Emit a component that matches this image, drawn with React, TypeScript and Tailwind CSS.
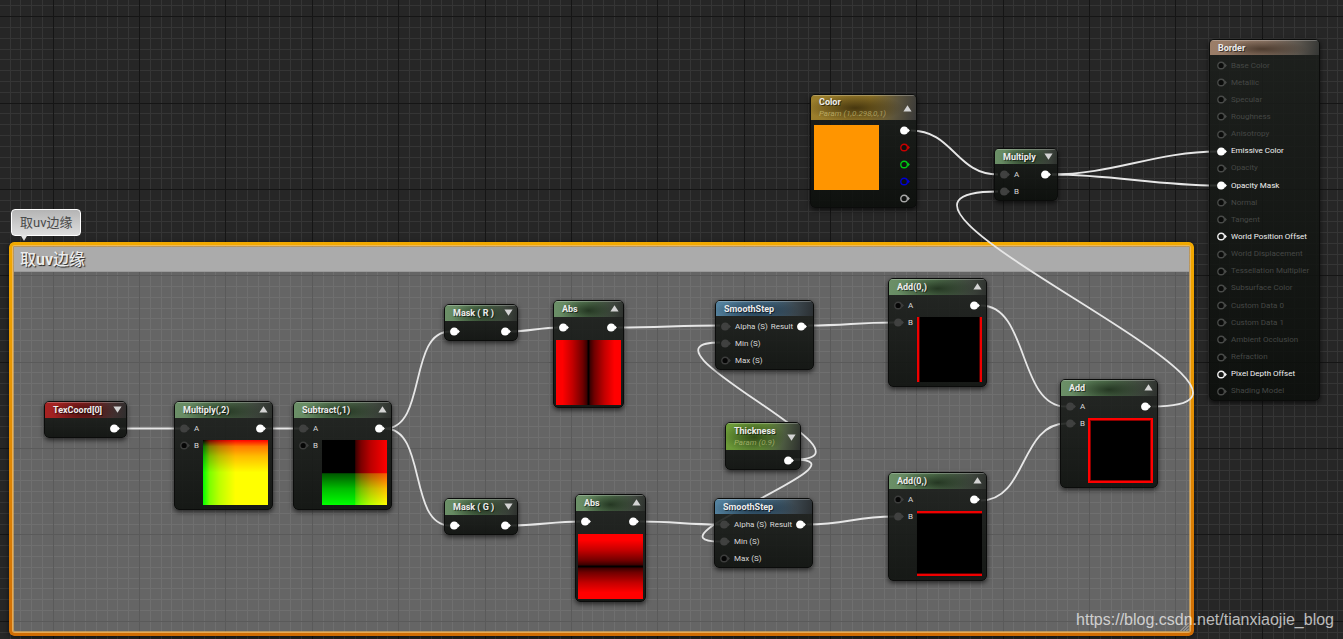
import React from 'react';
import clsx from 'clsx';

type PinKind = 'filled' | 'linked' | 'empty' | 'ring' | 'off' | 'red' | 'green' | 'blue' | 'alpha';

const PIN_COLORS: Record<PinKind, { stroke: string; fill: string }> = {
    filled: { stroke: '#ffffff', fill: '#ffffff' },
    linked: { stroke: '#404140', fill: '#404140' },
    empty: { stroke: '#3c3d3c', fill: '#060606' },
    ring: { stroke: '#f0f0f0', fill: '#141614' },
    off: { stroke: '#484a48', fill: '#0a0b0a' },
    red: { stroke: '#c80000', fill: '#101210' },
    green: { stroke: '#00c814', fill: '#101210' },
    blue: { stroke: '#0000d2', fill: '#101210' },
    alpha: { stroke: '#a8a8a8', fill: '#101210' },
};

const HEADERS = {
    green: 'bg-[radial-gradient(ellipse_42%_80%_at_50%_60%,rgba(28,44,26,0.85),transparent),linear-gradient(100deg,#6c9068,#5b7e57_45%,#414a40_80%,#2e312e)]',
    blue: 'bg-[radial-gradient(ellipse_44%_80%_at_42%_65%,rgba(22,44,62,0.85),transparent),linear-gradient(100deg,#54829f,#4a728d_50%,#3c4850_80%,#2b2f32)]',
    red: 'bg-[radial-gradient(ellipse_40%_80%_at_48%_60%,rgba(60,12,12,0.85),transparent),linear-gradient(100deg,#a82222,#922221_45%,#4a3030_78%,#2e2e2e)]',
    lime: 'bg-[radial-gradient(ellipse_42%_60%_at_38%_52%,rgba(38,62,18,0.85),transparent),linear-gradient(100deg,#6d9c38,#668f38_50%,#4b5840_78%,#2e312e)]',
    gold: 'bg-[radial-gradient(ellipse_46%_55%_at_42%_52%,rgba(58,44,10,0.85),transparent),linear-gradient(100deg,#9c7f2c,#8c7228_55%,#5c543c_80%,#3a3a3a)]',
    tan: 'bg-[radial-gradient(ellipse_42%_60%_at_48%_60%,rgba(62,46,34,0.8),transparent),linear-gradient(100deg,#9c7e68,#8b7464_50%,#5c564e_80%,#343634)]',
};

const PREVIEWS = {
    uv: 'bg-[linear-gradient(to_right,#000,#7b0000_10%,#bc0000_25%,#f00_50%),linear-gradient(to_bottom,#000,#007b00_10%,#00bc00_25%,#0f0_50%)] bg-blend-screen',
    uvShift: 'bg-[linear-gradient(to_right,#000_50%,#400000_52%,#7b0000_60%,#bc0000_75%,#f00),linear-gradient(to_bottom,#000_50%,#005900_52%,#007b00_60%,#00bc00_75%,#0f0)] bg-blend-screen',
    absU: 'bg-[linear-gradient(to_right,#f00_10%,#c40000_25%,#700000_41%,#380000_48%,#000_49%,#000_51%,#380000_52%,#700000_59%,#c40000_75%,#f00_90%)]',
    absV: 'bg-[linear-gradient(to_bottom,#f00_10%,#c40000_25%,#700000_41%,#380000_48%,#000_49%,#000_51%,#380000_52%,#700000_59%,#c40000_75%,#f00_90%)]',
    edgeU: 'bg-black border-x-2 border-[#f00000] shadow-[inset_1px_0_#5a0000,inset_-1px_0_#5a0000]',
    edgeV: 'bg-black border-y-2 border-[#f00000] shadow-[inset_0_1px_#5a0000,inset_0_-1px_#5a0000]',
    edge: 'bg-black border-2 border-[#ff0000] shadow-[inset_0_0_0_1px_#8a0000]',
    solid: 'bg-[#ff9500]',
};

// Major grid line every 8 cells
const CELL = 10.795;
const GRID_LINES = Array.from({ length: 400 }, (_, i) => i - 8);

const Grid = () => (
    <svg className="absolute inset-0 h-full w-full" shapeRendering="crispEdges" aria-hidden="true">
        {[false, true].map(major =>
            GRID_LINES.filter(i => (i % 8 === 0) === major).map(i => {
                const x = Math.floor(53.2 + i * CELL);
                const y = Math.floor(16.7 + i * CELL);
                return (
                    <g key={i} fill={major ? '#151515' : '#353535'}>
                        <rect x={x} y="0" width="1" height="100%" />
                        <rect x="0" y={y} width="100%" height="1" />
                    </g>
                );
            })
        )}
    </svg>
);

// [x1, y1, x2, y2, tangent]
const WIRES: number[][] = [
    [120, 428, 180, 428, 20],
    [266, 428, 300, 428, 10],
    [385, 428, 450, 331, 42],
    [385, 428, 450, 525, 42],
    [511, 331, 558, 327, 15],
    [511, 525, 580, 521, 25],
    [618, 327, 720, 325, 40],
    [640, 521, 720, 524, 35],
    [794, 459, 720, 342, 98],
    [794, 459, 720, 541, 82],
    [808, 325, 894, 322, 40],
    [807, 524, 894, 516, 40],
    [981, 305, 1066, 406, 48],
    [981, 500, 1066, 423, 46],
    [1152, 406, 998, 191, 188],
    [911, 130, 998, 174, 42],
    [1052, 174, 1217, 151, 60],
    [1052, 174, 1217, 185, 60],
];

const Wires = () => (
    <svg className="absolute inset-0 h-full w-full" fill="none" stroke="#e6e6e6" strokeWidth="1.8" aria-hidden="true">
        {WIRES.map(([x1, y1, x2, y2, t], i) => (
            <path key={i} d={`M${x1} ${y1 + 0.5}C${x1 + t} ${y1 + 0.5} ${x2 - t} ${y2 + 0.5} ${x2} ${y2 + 0.5}`} />
        ))}
    </svg>
);

const Pin = ({ kind }: { kind: PinKind }) => {
    const { stroke, fill } = PIN_COLORS[kind];
    return (
        <svg width="10" height="9" viewBox="0 0 10 9" className="shrink-0" aria-hidden="true">
            <path d="M8 2.6 9.9 4.5 8 6.4Z" fill={stroke} />
            <circle cx="4.1" cy="4.5" r="3.3" fill={fill} stroke={stroke} strokeWidth="1.4" />
        </svg>
    );
};

const InPin = ({ kind, label }: { kind: PinKind; label?: string }) => (
    <div className="flex h-[17px] items-center gap-1 whitespace-nowrap">
        <Pin kind={kind} />
        {label && <span>{label}</span>}
    </div>
);

const OutPin = ({ kind = 'filled', label }: { kind?: PinKind; label?: string }) => (
    <div className="flex h-[17px] items-center justify-end gap-1 pr-1.5">
        {label && <span>{label}</span>}
        <Pin kind={kind} />
    </div>
);

const Preview = ({ kind }: { kind: keyof typeof PREVIEWS }) => (
    <div className={clsx('size-[65px] shrink-0', PREVIEWS[kind])} />
);

interface NodeProps {
    title: string;
    sub?: string;
    color: keyof typeof HEADERS;
    place: string;
    header?: string;
    arrow?: 'up' | 'down';
    children: React.ReactNode;
}

const Node = ({ title, sub, color, place, header = 'h-4', arrow, children }: NodeProps) => (
    <section
        className={clsx(
            'absolute overflow-hidden rounded-[5px] border border-[#0b0c0b] bg-linear-to-b from-[#1c1f1c]/88 to-[#0b0e0b]/88 text-[8px] text-[#d8d8d8] shadow-[0_2px_5px_rgba(0,0,0,0.65)]',
            place
        )}
    >
        <header
            className={clsx(
                'flex justify-between pr-1 pl-2 shadow-[inset_0_1px_rgba(255,255,255,0.25)]',
                sub ? 'items-center' : 'items-start pt-0.5',
                header,
                HEADERS[color]
            )}
        >
            <div className="whitespace-nowrap">
                <h3 className="text-[9px] leading-[13px] font-bold text-[#ececec] [text-shadow:1px_1px_#0008]">{title}</h3>
                {sub && <p className="text-[8px] leading-[10px] text-[#fff8b0]/45 italic">{sub}</p>}
            </div>
            {arrow && (
                <button type="button" aria-label="Toggle preview" className="mt-0.5 shrink-0">
                    <svg width="9" height="7" viewBox="0 0 9 7" fill="#d4d4d4">
                        <path d={arrow === 'up' ? 'M4.5 0.3 8.6 6.6H0.4Z' : 'M4.5 6.7 8.6 0.4H0.4Z'} />
                    </svg>
                </button>
            )}
        </header>
        <div className="pt-0.5">{children}</div>
    </section>
);

const MathNode = ({ title, place, preview, a = 'linked', b = 'empty' }: {
    title: string; place: string; preview: keyof typeof PREVIEWS; a?: PinKind; b?: PinKind;
}) => (
    <Node title={title} color="green" place={place} arrow="up">
        <div className="flex justify-between pb-1 pl-[5px]">
            <div>
                <InPin kind={a} label="A" />
                <InPin kind={b} label="B" />
            </div>
            <div>
                <OutPin />
                <div className="pt-[3px] pr-1">
                    <Preview kind={preview} />
                </div>
            </div>
        </div>
    </Node>
);

const MaskNode = ({ title, place }: { title: string; place: string }) => (
    <Node title={title} color="green" place={clsx('w-[74px]', place)} arrow="down">
        <div className="flex justify-between pl-[5px]">
            <InPin kind="filled" />
            <OutPin />
        </div>
    </Node>
);

const AbsNode = ({ place, preview }: { place: string; preview: keyof typeof PREVIEWS }) => (
    <Node title="Abs" color="green" place={clsx('w-[71px]', place)} arrow="up">
        <div className="flex justify-between pl-[5px]">
            <InPin kind="filled" />
            <OutPin />
        </div>
        <div className="flex justify-center pt-1 pb-0.5">
            <Preview kind={preview} />
        </div>
    </Node>
);

const SmoothStepNode = ({ place }: { place: string }) => (
    <Node title="SmoothStep" color="blue" place={clsx('w-[99px]', place)} header="h-[15px]">
        <div className="flex justify-between pl-[5px]">
            <div>
                <InPin kind="linked" label="Alpha (S)" />
                <InPin kind="linked" label="Min (S)" />
                <InPin kind="empty" label="Max (S)" />
            </div>
            <OutPin label="Result" />
        </div>
    </Node>
);

const OUTPUTS: { label: string; kind: PinKind }[] = [
    { label: 'Base Color', kind: 'off' },
    { label: 'Metallic', kind: 'off' },
    { label: 'Specular', kind: 'off' },
    { label: 'Roughness', kind: 'off' },
    { label: 'Anisotropy', kind: 'off' },
    { label: 'Emissive Color', kind: 'filled' },
    { label: 'Opacity', kind: 'off' },
    { label: 'Opacity Mask', kind: 'filled' },
    { label: 'Normal', kind: 'off' },
    { label: 'Tangent', kind: 'off' },
    { label: 'World Position Offset', kind: 'ring' },
    { label: 'World Displacement', kind: 'off' },
    { label: 'Tessellation Multiplier', kind: 'off' },
    { label: 'Subsurface Color', kind: 'off' },
    { label: 'Custom Data 0', kind: 'off' },
    { label: 'Custom Data 1', kind: 'off' },
    { label: 'Ambient Occlusion', kind: 'off' },
    { label: 'Refraction', kind: 'off' },
    { label: 'Pixel Depth Offset', kind: 'ring' },
    { label: 'Shading Model', kind: 'off' },
];

export default function App() {
    return (
        <main className="relative min-h-screen overflow-hidden bg-[#262626] font-[Roboto,'Noto_Sans_CJK_SC',sans-serif]">
            <Grid />

            {/* Comment bubble */}
            <div className="absolute top-[209px] left-[11px] rounded border border-white bg-linear-to-b from-[#b4b4b4] to-[#dedede] px-2 py-[3px] text-[13px] leading-[19px] text-[#4a4a4a]">
                取uv边缘
                <svg className="absolute top-full left-2" width="8" height="6" viewBox="0 0 8 6" fill="#e4e4e4" aria-hidden="true">
                    <path d="M0.5 0H7.5L4 6Z" />
                </svg>
            </div>

            {/* Comment box, the frame is masked so the grid shows through the middle */}
            <section className="absolute top-[242px] left-[9px] h-[394px] w-[1185px] rounded-[5px] p-[3px] shadow-[0_1px_5px_rgba(0,0,0,0.6)]">
                <div className="absolute inset-0 rounded-[5px] bg-linear-to-b from-[#f2a900] to-[#cf6c04] p-1 [mask:linear-gradient(#000_0_0)_content-box_exclude,linear-gradient(#000_0_0)]" />
                <div className="relative h-full rounded-[3px] border-2 border-[#f0b75a]/60 bg-[#e8e8e8]/33">
                    <h2 className="h-[25px] border-b border-[#9a9a9a] bg-[#ababab] pl-1.5 text-[16px] leading-[25px] font-bold text-[#ececec] [text-shadow:1px_1px_1px_#222]">
                        <span className="font-medium">取</span>uv<span className="font-medium">边缘</span>
                    </h2>
                    <svg className="absolute right-0 bottom-0" width="9" height="8" viewBox="0 0 9 8" stroke="#b8b8b8" aria-hidden="true">
                        <path d="M0.5 8 8.5 0M3.5 8 9 2.5M6.5 8 9 5.5" />
                    </svg>
                </div>
            </section>

            <Wires />

            {/* Nodes */}
            <Node title="TexCoord[0]" color="red" place="top-[401px] left-[44px] w-[83px]" arrow="down">
                <OutPin />
            </Node>
            <MathNode title="Multiply(,2)" place="top-[401px] left-[174px] w-[99px]" preview="uv" />
            <MathNode title="Subtract(,1)" place="top-[401px] left-[293px] w-[99px]" preview="uvShift" />
            <MaskNode title="Mask ( R )" place="top-[304px] left-[444px]" />
            <MaskNode title="Mask ( G )" place="top-[498px] left-[444px]" />
            <AbsNode place="top-[300px] left-[553px]" preview="absU" />
            <AbsNode place="top-[494px] left-[575px]" preview="absV" />
            <SmoothStepNode place="top-[300px] left-[715px]" />
            <SmoothStepNode place="top-[498px] left-[714px]" />
            <Node title="Thickness" sub="Param (0.9)" color="lime" place="top-[422px] left-[725px] w-[76px]" header="h-[27px]" arrow="down">
                <OutPin />
            </Node>
            <MathNode title="Add(0,)" place="top-[278px] left-[888px] w-[99px]" preview="edgeU" a="empty" b="linked" />
            <MathNode title="Add(0,)" place="top-[472px] left-[888px] w-[99px]" preview="edgeV" a="empty" b="linked" />
            <MathNode title="Add" place="top-[379px] left-[1060px] w-[98px]" preview="edge" b="linked" />

            <Node title="Color" sub="Param (1,0.298,0,1)" color="gold" place="top-[94px] left-[810px] w-[107px]" header="h-[25px]" arrow="up">
                <div className="flex justify-between pl-[3px]">
                    <div className="pt-[3px]">
                        <Preview kind="solid" />
                    </div>
                    <div>
                        <OutPin />
                        <OutPin kind="red" />
                        <OutPin kind="green" />
                        <OutPin kind="blue" />
                        <OutPin kind="alpha" />
                    </div>
                </div>
            </Node>
            <Node title="Multiply" color="green" place="top-[148px] left-[994px] w-[64px]" header="h-[15px]" arrow="down">
                <div className="flex justify-between pl-[5px]">
                    <div>
                        <InPin kind="linked" label="A" />
                        <InPin kind="linked" label="B" />
                    </div>
                    <OutPin />
                </div>
            </Node>
            <Node title="Border" color="tan" place="top-[39px] left-[1209px] w-[111px]" header="h-[15px]">
                <ul className="grid h-[343px] grid-rows-[repeat(20,1fr)] pl-[7px]">
                    {OUTPUTS.map(({ label, kind }) => (
                        <li key={label} className={kind === 'off' ? 'text-[#454745]' : 'text-[#f2f2f2]'}>
                            <InPin kind={kind} label={label} />
                        </li>
                    ))}
                </ul>
            </Node>

            <a href="https://blog.csdn.net/tianxiaojie_blog" className="absolute right-[9px] bottom-[7px] font-['Liberation_Sans',Arial,sans-serif] text-[16px] leading-6 text-white/70">
                https://blog.csdn.net/tianxiaojie_blog
            </a>
        </main>
    );
}
